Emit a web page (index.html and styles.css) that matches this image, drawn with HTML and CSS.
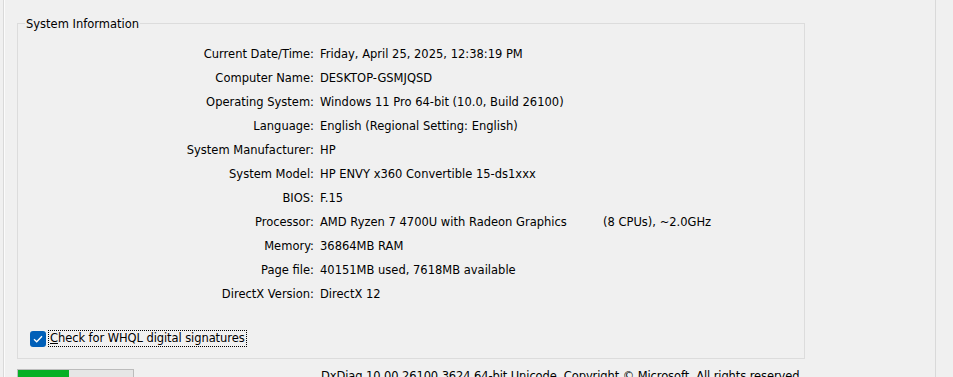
FILE: index.html
```html
<!DOCTYPE html>
<html>
<head>
<meta charset="utf-8">
<link rel="stylesheet" href="styles.css">
</head>
<body>
<div class="tab">
  <fieldset class="group">
    <legend class="group-title">System Information</legend>
    <div class="info">
      <div class="lbl">Current Date/Time:</div><div class="val">Friday, April 25, 2025, 12:38:19 PM</div>
      <div class="lbl">Computer Name:</div><div class="val">DESKTOP-GSMJQSD</div>
      <div class="lbl">Operating System:</div><div class="val">Windows 11 Pro 64-bit (10.0, Build 26100)</div>
      <div class="lbl">Language:</div><div class="val">English (Regional Setting: English)</div>
      <div class="lbl">System Manufacturer:</div><div class="val">HP</div>
      <div class="lbl">System Model:</div><div class="val">HP ENVY x360 Convertible 15-ds1xxx</div>
      <div class="lbl">BIOS:</div><div class="val">F.15</div>
      <div class="lbl">Processor:</div><div class="val"><span class="cpu">AMD Ryzen 7 4700U with Radeon Graphics</span><span>(8 CPUs), ~2.0GHz</span></div>
      <div class="lbl">Memory:</div><div class="val">36864MB RAM</div>
      <div class="lbl">Page file:</div><div class="val">40151MB used, 7618MB available</div>
      <div class="lbl">DirectX Version:</div><div class="val">DirectX 12</div>
    </div>
    <div class="check-row">
      <span class="checkbox"><svg width="10" height="8" viewBox="0 0 10 8"><path d="M1 4.2 L3.7 6.8 L9 1.2" fill="none" stroke="#fff" stroke-width="1.3"/></svg></span>
      <span class="check-label"><u>C</u>heck for WHQL digital signatures</span>
    </div>
  </fieldset>
  <div class="footer">
    <div class="progress"><div class="progress-fill" style="width:51px"></div></div>
    <div class="copyright">DxDiag 10.00.26100.3624 64-bit Unicode&nbsp; Copyright © Microsoft. All rights reserved.</div>
  </div>
</div>
</body>
</html>
```

FILE: styles.css
```css
html, body {
  margin: 0;
  padding: 0;
  background: #f0f0f0;
  overflow: hidden;
}
body {
  width: 953px;
  height: 377px;
  font-family: "DejaVu Sans", sans-serif;
  font-size: 11.5px;
  color: #000;
}
.tab {
  margin-left: 3px;
  width: 931px;
  border-left: 1px solid #d9d9d9;
  border-right: 1px solid #d9d9d9;
  box-shadow: inset 1px 0 0 #fbfbfb;
  padding-top: 17px;
  box-sizing: content-box;
  height: 360px;
}
.group {
  margin: 0 0 0 13px;
  padding: 0 0 11px 0;
  width: 786px;
  border: 1px solid #dcdcdc;
  min-width: 0;
}
.group-title {
  margin-left: 7px;
  padding: 0 1px;
  line-height: 14px;
  height: 12px;
}
.info {
  display: grid;
  grid-template-columns: 296px 1fr;
  column-gap: 6px;
  grid-auto-rows: 24px;
  align-items: center;
  padding-top: 13px;
}
.lbl {
  text-align: right;
  white-space: nowrap;
}
.val {
  white-space: nowrap;
}
.cpu {
  display: inline-block;
  width: 283px;
}
.check-row {
  display: flex;
  align-items: center;
  margin-top: 24px;
  margin-left: 12px;
  height: 17px;
}
.checkbox {
  width: 16px;
  height: 16px;
  border-radius: 3px;
  background: #005fb8;
  display: flex;
  align-items: center;
  justify-content: center;
}
.check-label {
  margin-left: 3px;
  padding: 0 1px;
  outline: 1px dotted #000;
  outline-offset: 0;
  line-height: 15px;
  letter-spacing: -0.08px;
}
.footer {
  display: flex;
  align-items: flex-start;
  margin-top: 10px;
  margin-left: 13px;
}
.progress {
  width: 115px;
  height: 22px;
  border: 1px solid #bcbcbc;
  background: #e6e6e6;
}
.progress-fill {
  height: 100%;
  background: #06b025;
}
.copyright {
  margin-left: 187px;
  line-height: 14px;
  white-space: nowrap;
  letter-spacing: -0.1px;
}
```
